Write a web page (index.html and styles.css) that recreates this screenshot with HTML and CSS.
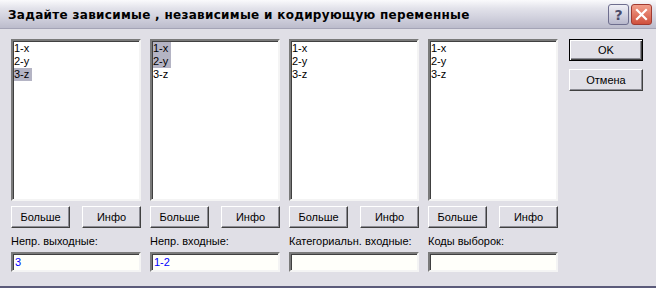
FILE: index.html
```html
<!DOCTYPE html>
<html lang="ru">
<head>
<meta charset="UTF-8">
<title>Задайте зависимые, независимые и кодирующую переменные</title>
<link rel="stylesheet" href="styles.css">
</head>
<body>

<div class="window">
    <!-- заголовок -->
    <div class="titlebar">
        <span class="title">Задайте зависимые , независимые и кодирующую переменные</span>
        <div class="title-buttons">
            <span class="tbtn help">?</span>
            <span class="tbtn close">
                <svg width="13" height="13" viewBox="0 0 13 13"><path d="M2 2 L11 11 M11 2 L2 11" stroke="#fff" stroke-width="2.2" stroke-linecap="square"/></svg>
            </span>
        </div>
    </div>

    <div class="content">
        <div class="columns">
            <div class="col">
                <div class="listbox">
                    <div class="item">1-x</div>
                    <div class="item">2-y</div>
                    <div class="item"><span class="sel">3-z</span></div>
                </div>
                <div class="btn-row">
                    <button class="btn">Больше</button>
                    <button class="btn">Инфо</button>
                </div>
                <div class="label">Непр. выходные:</div>
                <div class="field">3</div>
            </div>

            <div class="col">
                <div class="listbox">
                    <div class="item"><span class="sel">1-x</span></div>
                    <div class="item"><span class="sel">2-y</span></div>
                    <div class="item">3-z</div>
                </div>
                <div class="btn-row">
                    <button class="btn">Больше</button>
                    <button class="btn">Инфо</button>
                </div>
                <div class="label">Непр. входные:</div>
                <div class="field">1-2</div>
            </div>

            <div class="col">
                <div class="listbox">
                    <div class="item">1-x</div>
                    <div class="item">2-y</div>
                    <div class="item">3-z</div>
                </div>
                <div class="btn-row">
                    <button class="btn">Больше</button>
                    <button class="btn">Инфо</button>
                </div>
                <div class="label">Категориальн. входные:</div>
                <div class="field"></div>
            </div>

            <div class="col">
                <div class="listbox">
                    <div class="item">1-x</div>
                    <div class="item">2-y</div>
                    <div class="item">3-z</div>
                </div>
                <div class="btn-row">
                    <button class="btn">Больше</button>
                    <button class="btn">Инфо</button>
                </div>
                <div class="label">Коды выборок:</div>
                <div class="field"></div>
            </div>
        </div>

        <div class="side">
            <button class="btn default">OK</button>
            <button class="btn">Отмена</button>
        </div>
    </div>
</div>

</body>
</html>
```

FILE: styles.css
```css
body {
margin: 0;
font-family: "Liberation Sans", Arial, sans-serif;
font-size: 11px;
color: #000;
}

.window {
width: 656px;
height: 288px;
background: #e0dfe6;
box-sizing: border-box;
border-bottom: 2px solid #5b5b7a;
display: flex;
flex-direction: column;
}

.titlebar {
height: 29px;
box-sizing: border-box;
display: flex;
align-items: center;
justify-content: space-between;
padding: 1px 4px 0 8px;
background: linear-gradient(#fafafc 0%, #e2e2ea 30%, #cdcdda 70%, #bcbccc 100%);
border-bottom: 1px solid #a4a4b6;
}

.title {
font-family: "DejaVu Sans", sans-serif;
font-weight: bold;
font-size: 12px;
letter-spacing: 0.3px;
color: #000;
}

.title-buttons {
display: flex;
gap: 2px;
}

.tbtn {
width: 21px;
height: 21px;
box-sizing: border-box;
border-radius: 3px;
display: flex;
align-items: center;
justify-content: center;
}

.tbtn.help {
background: linear-gradient(#f0f0f6, #b8b8cc);
border: 1px solid #6e6e8e;
color: #4a4a6a;
font-family: "DejaVu Sans", sans-serif;
font-weight: bold;
font-size: 14px;
}

.tbtn.close {
background: linear-gradient(#f2a08c, #d0503c);
border: 1px solid #a03a30;
}

.content {
display: flex;
padding: 10px 0 0 11px;
gap: 11px;
}

.columns {
display: flex;
gap: 9px;
}

.col {
width: 130px;
display: flex;
flex-direction: column;
}

.listbox {
height: 162px;
box-sizing: border-box;
background: #fff;
border: 2px solid;
border-color: #7a7a7a #f4f4f4 #f4f4f4 #7a7a7a;
box-shadow: inset 1px 1px 0 #404040;
padding: 1px 0 0 1px;
}

.item {
height: 13px;
line-height: 13px;
}

.sel {
display: inline-block;
background: #b4b4c4;
padding-right: 3px;
}

.btn-row {
display: flex;
justify-content: space-between;
margin-top: 5px;
}

.btn {
width: 59px;
height: 22px;
box-sizing: border-box;
background: #e0dfe6;
font-family: "Liberation Sans", Arial, sans-serif;
font-size: 11px;
color: #000;
border: 1px solid;
border-color: #ffffff #404040 #404040 #ffffff;
box-shadow: inset -1px -1px 0 #8c8c94;
padding: 0;
}

.label {
margin-top: 7px;
height: 12px;
line-height: 12px;
color: #000;
}

.field {
margin-top: 5px;
height: 20px;
box-sizing: border-box;
background: #fffffa;
border: 2px solid;
border-color: #7a7a7a #f4f4f4 #f4f4f4 #7a7a7a;
box-shadow: inset 1px 1px 0 #404040;
color: #0000ff;
padding: 2px 0 0 2px;
line-height: 13px;
}

.side {
display: flex;
flex-direction: column;
gap: 8px;
}

.side .btn {
width: 74px;
height: 22px;
}

.btn.default {
border: 1px solid #000;
box-shadow: inset 1px 1px 0 #fff, inset -1px -1px 0 #404040, inset -2px -2px 0 #8c8c94;
}
```
